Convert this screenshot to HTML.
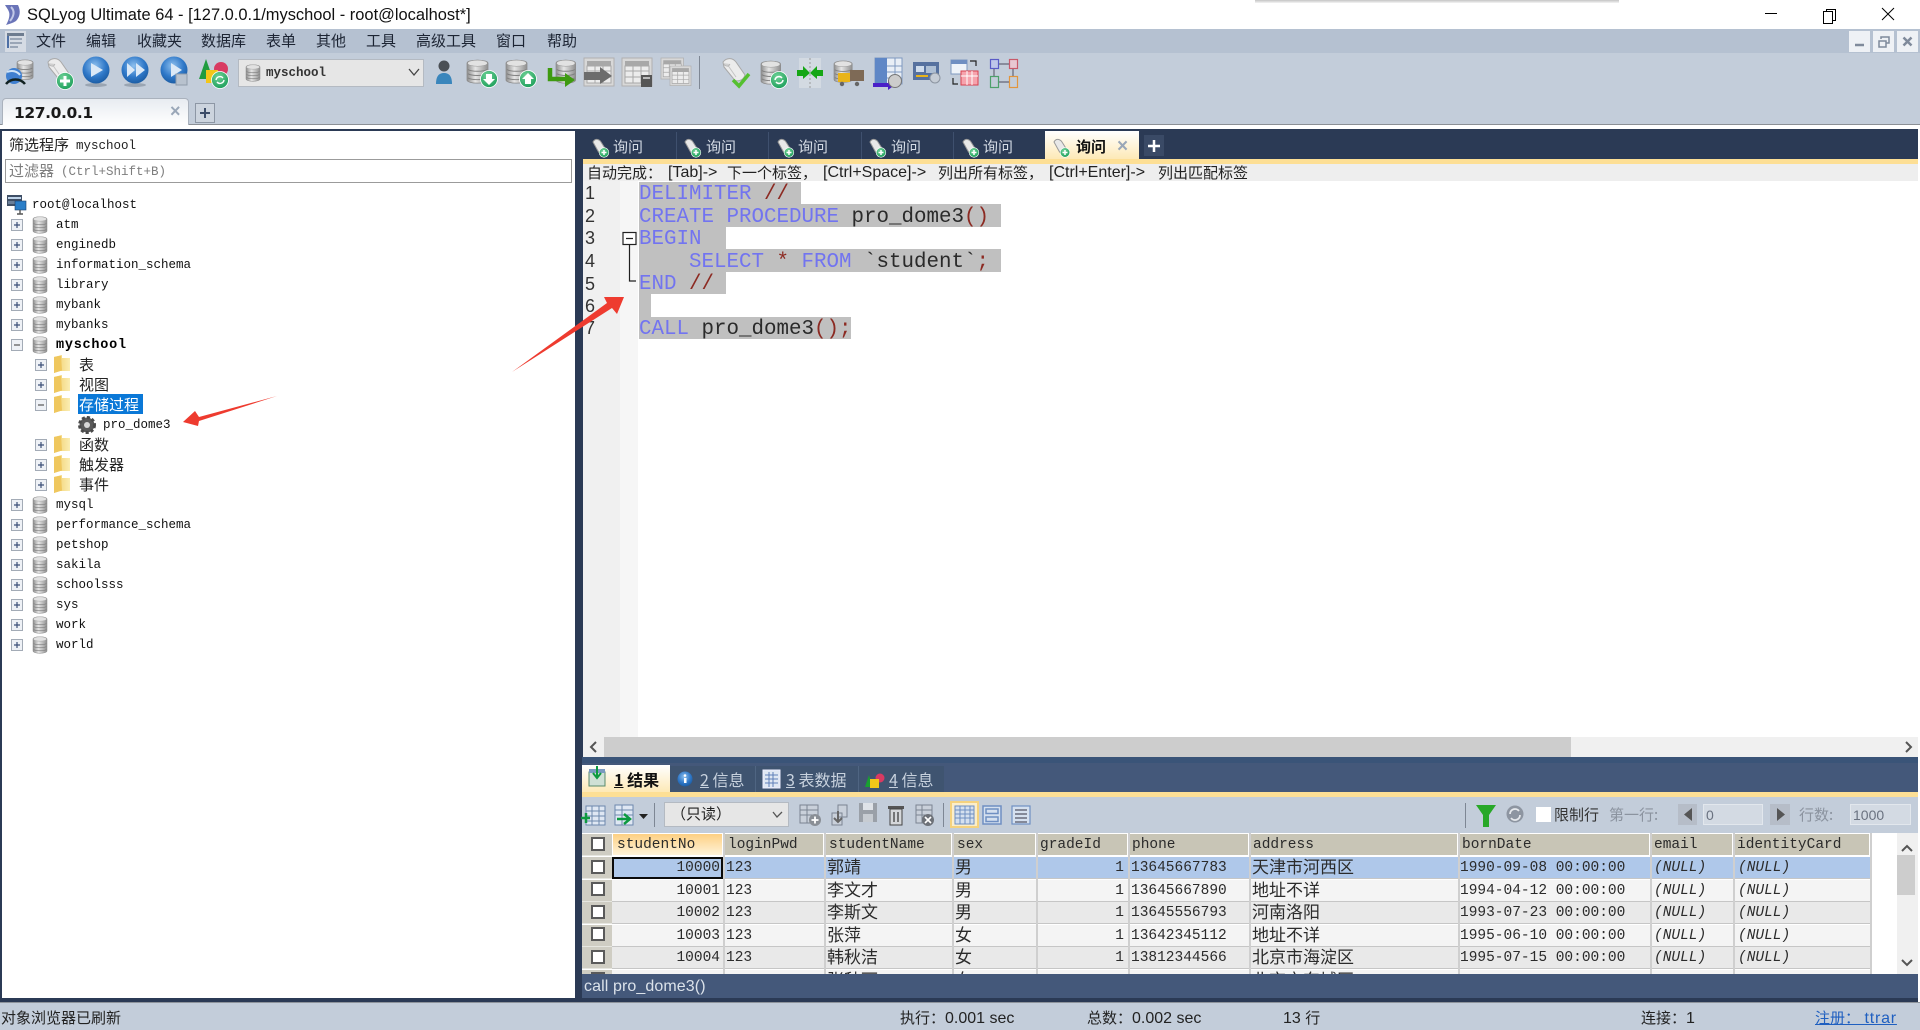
<!DOCTYPE html>
<html lang="zh-CN"><head><meta charset="utf-8"><title>SQLyog Ultimate 64</title>
<style>
html,body{margin:0;padding:0;background:#fff}
body{position:relative;width:1920px;height:1030px;overflow:hidden;font-family:"Liberation Sans","Noto Sans CJK SC",sans-serif;color:#222;filter:blur(.35px)}
.b,.t{position:absolute}
.t{white-space:pre;line-height:1}
.m{font-family:"Liberation Mono","Noto Sans CJK SC",monospace}
.menu{font-size:15px;top:33px;color:#1c2433;font-family:"Noto Sans CJK SC",sans-serif}
.tr{font-family:"Liberation Mono","Noto Sans CJK SC",monospace;font-size:12.5px;color:#111;left:56px}
.cn{font-family:"Noto Sans CJK SC",sans-serif;font-size:15px;left:79px;color:#222}
.q{font-size:15px;top:139px;color:#d4dbe5;font-family:"Noto Sans CJK SC",sans-serif}
.ac{font-size:16px;top:165px;color:#222}
.acz{font-size:15px;font-family:"Noto Sans CJK SC",sans-serif}
.code{font-family:"Liberation Mono",monospace;font-size:20.83px;left:639px;color:#2a2a2a}
.k{color:#7274f0}.o{color:#8c2a22}
.ln{font-size:18px;left:585px;color:#333}
.sel{position:absolute;left:639px;background:#c0c0c0}
.rt{font-size:16px;top:771px;color:#c8d2de;font-family:"Noto Sans CJK SC",sans-serif}
.st{font-size:16px;top:1010px;color:#222}
.stz{font-size:15px;font-family:"Noto Sans CJK SC",sans-serif}
#g{position:absolute;left:582px;top:833px;width:1315px;height:141px;overflow:hidden;background:#fff}
.r{position:absolute;left:0;width:1288px;height:21px;border-bottom:1.5px solid #c6c6c6}
.r span,.h span{position:absolute;top:1px;white-space:pre;font-family:"Liberation Mono","Noto Sans CJK SC",monospace;font-size:14.5px;line-height:21px;color:#2b2b2b}
.r .z{font-size:17px;font-family:"Noto Sans CJK SC",sans-serif;top:-2px}
.r .n{font-style:italic}
.hc{position:absolute;top:1px;height:21px;background:#c8c5b6}
.v{position:absolute;top:0;width:2px;height:141px;background:#cfcfcf}
.rh{position:absolute;left:0;width:30px;height:21px;background:#cfcdc3;border-bottom:1.5px solid #e6e6e0}
.rh i{position:absolute;left:8.5px;top:2.5px;width:10px;height:10px;border:2px solid #5a5a5a;background:#fff}
</style></head><body>
<!-- title bar -->
<div class="b" style="left:1255px;top:0;width:364px;height:3px;background:linear-gradient(#c4c4c4,#f4f4f4)"></div>
<div class="t" style="left:27px;top:7px;font-size:16.45px;color:#111">SQLyog Ultimate 64 - [127.0.0.1/myschool - root@localhost*]</div>
<!-- menu -->
<div class="b" style="left:0;top:29px;width:1920px;height:24px;background:#b5c1d1"></div>
<div class="b" style="left:0;top:53px;width:1920px;height:71px;background:#c3cdda"></div>
<div class="b" style="left:0;top:124px;width:1920px;height:1px;background:#8b8f95"></div>
<div class="t menu" style="left:36px">文件</div><div class="t menu" style="left:86px">编辑</div><div class="t menu" style="left:137px">收藏夹</div><div class="t menu" style="left:201px">数据库</div><div class="t menu" style="left:266px">表单</div><div class="t menu" style="left:316px">其他</div><div class="t menu" style="left:366px">工具</div><div class="t menu" style="left:416px">高级工具</div><div class="t menu" style="left:496px">窗口</div><div class="t menu" style="left:547px">帮助</div>
<div class="b" style="left:1849px;top:31px;width:21px;height:21px;background:#eef1f5"></div>
<div class="b" style="left:1873px;top:31px;width:21px;height:21px;background:#eef1f5"></div>
<div class="b" style="left:1897px;top:31px;width:21px;height:21px;background:#eef1f5"></div>
<!-- db select -->
<div class="b" style="left:238px;top:59px;width:186px;height:28px;background:#e6e6e6;box-sizing:border-box;border:1px solid #b4bac2"></div>
<div class="t m" style="left:266px;top:67px;font-size:12.5px;font-weight:bold;color:#333">myschool</div>
<!-- connection tab -->
<div class="b" style="left:2px;top:98px;width:187px;height:27px;background:linear-gradient(#e8ecf1,#fff);box-sizing:border-box;border:1px solid #aab2bd;border-bottom:0;border-radius:4px 4px 0 0"></div>
<div class="t" style="left:14px;top:106px;font-size:15.5px;font-weight:bold;color:#1a1a1a;font-family:'DejaVu Sans',sans-serif;letter-spacing:-.4px">127.0.0.1</div>
<div class="t" style="left:170px;top:102px;font-size:18px;font-weight:bold;color:#9aa7b8">×</div>
<div class="b" style="left:195px;top:103px;width:20px;height:20px;background:#ccd4de;box-sizing:border-box;border:1px solid #8d97a5"></div>
<!-- main frame -->
<div class="b" style="left:0;top:129px;width:1918px;height:873px;background:#2b3a55"></div>
<div class="b" style="left:2px;top:131px;width:573px;height:867px;background:#fff"></div>
<div class="t" style="left:9px;top:137px;font-size:15px;color:#222;font-family:'Noto Sans CJK SC',sans-serif">筛选程序<span class="m" style="font-size:12.5px;margin-left:7px;position:relative;top:-1px">myschool</span></div>
<div class="b" style="left:5px;top:159px;width:567px;height:24px;box-sizing:border-box;border:1.5px solid #9b9b9b;background:#fff"></div>
<div class="t" style="left:9px;top:163px;font-size:15px;color:#7d7d7d;font-family:'Noto Sans CJK SC',sans-serif">过滤器<span class="m" style="font-size:12.5px;margin-left:7px;position:relative;top:-1px">(Ctrl+Shift+B)</span></div>
<!-- tree -->
<div class="t tr" style="left:32px;top:199px">root@localhost</div>
<div class="t tr" style="top:219px">atm</div><div class="t tr" style="top:239px">enginedb</div><div class="t tr" style="top:259px">information_schema</div><div class="t tr" style="top:279px">library</div><div class="t tr" style="top:299px">mybank</div><div class="t tr" style="top:319px">mybanks</div>
<div class="t tr" style="top:339px;font-weight:bold;color:#000;font-size:13.5px;letter-spacing:.75px">myschool</div>
<div class="t cn" style="top:357px">表</div><div class="t cn" style="top:377px">视图</div>
<div class="b" style="left:78px;top:394px;width:65px;height:20px;background:#0a78d7"></div>
<div class="t cn" style="top:397px;color:#fff">存储过程</div>
<div class="t tr" style="left:103px;top:419px">pro_dome3</div>
<div class="t cn" style="top:437px">函数</div><div class="t cn" style="top:457px">触发器</div><div class="t cn" style="top:477px">事件</div>
<div class="t tr" style="top:499px">mysql</div><div class="t tr" style="top:519px">performance_schema</div><div class="t tr" style="top:539px">petshop</div><div class="t tr" style="top:559px">sakila</div><div class="t tr" style="top:579px">schoolsss</div><div class="t tr" style="top:599px">sys</div><div class="t tr" style="top:619px">work</div><div class="t tr" style="top:639px">world</div>
<!-- query tabs -->
<div class="b" style="left:676px;top:132px;width:1px;height:27px;background:#3f506e"></div><div class="b" style="left:768px;top:132px;width:1px;height:27px;background:#3f506e"></div><div class="b" style="left:861px;top:132px;width:1px;height:27px;background:#3f506e"></div><div class="b" style="left:953px;top:132px;width:1px;height:27px;background:#3f506e"></div>
<div class="t q" style="left:613px">询问</div><div class="t q" style="left:706px">询问</div><div class="t q" style="left:798px">询问</div><div class="t q" style="left:891px">询问</div><div class="t q" style="left:983px">询问</div>
<div class="b" style="left:1045px;top:131px;width:94px;height:28px;background:linear-gradient(#fff,#fde9b6)"></div>
<div class="t q" style="left:1076px;color:#111;font-weight:bold">询问</div>
<div class="t" style="left:1117px;top:137px;font-size:19px;font-weight:bold;color:#9aa7b8">×</div>
<div class="b" style="left:1144px;top:135px;width:20px;height:21px;background:#3a4a66"></div>
<div class="b" style="left:583px;top:159px;width:1335px;height:5px;background:#fddf95"></div>
<div class="b" style="left:583px;top:164px;width:1335px;height:17px;background:#eeeeee"></div>
<div class="t ac acz" style="left:587px">自动完成：</div>
<div class="t ac" style="left:668px">[Tab]-&gt;</div><div class="t ac acz" style="left:727px">下一个标签，</div>
<div class="t ac" style="left:823px">[Ctrl+Space]-&gt;</div><div class="t ac acz" style="left:938px">列出所有标签，</div>
<div class="t ac" style="left:1049px">[Ctrl+Enter]-&gt;</div><div class="t ac acz" style="left:1158px">列出匹配标签</div>
<!-- editor -->
<div class="b" style="left:583px;top:181px;width:1335px;height:556px;background:#fff"></div>
<div class="b" style="left:583px;top:181px;width:37px;height:556px;background:#f0f0f0"></div>
<div class="b" style="left:620px;top:181px;width:18px;height:556px;background:#f6f6f6"></div>
<div class="sel" style="top:182px;width:162px;height:23px"></div>
<div class="sel" style="top:204px;width:362px;height:23px"></div>
<div class="sel" style="top:227px;width:87px;height:22px"></div>
<div class="sel" style="top:249px;width:362px;height:23px"></div>
<div class="sel" style="top:272px;width:87px;height:22px"></div>
<div class="sel" style="top:294px;width:12px;height:23px"></div>
<div class="sel" style="top:317px;width:212px;height:22px"></div>
<div class="t ln" style="top:184px">1</div><div class="t ln" style="top:207px">2</div><div class="t ln" style="top:229px">3</div><div class="t ln" style="top:252px">4</div><div class="t ln" style="top:275px">5</div><div class="t ln" style="top:297px">6</div><div class="t ln" style="top:319px">7</div>
<div class="t code" style="top:185px"><span class="k">DELIMITER</span> <span class="o">//</span></div>
<div class="t code" style="top:208px"><span class="k">CREATE</span> <span class="k">PROCEDURE</span> pro_dome3<span class="o">()</span></div>
<div class="t code" style="top:230px"><span class="k">BEGIN</span></div>
<div class="t code" style="top:253px">    <span class="k">SELECT</span> <span class="o">*</span> <span class="k">FROM</span> `student`<span class="o">;</span></div>
<div class="t code" style="top:275px"><span class="k">END</span> <span class="o">//</span></div>
<div class="t code" style="top:320px"><span class="k">CALL</span> pro_dome3<span class="o">();</span></div>
<!-- h scrollbar -->
<div class="b" style="left:583px;top:737px;width:1335px;height:20px;background:#f0f0f0"></div>
<div class="b" style="left:604px;top:737px;width:967px;height:20px;background:#cdcdcd"></div>
<!-- result tabs -->
<div class="b" style="left:582px;top:757px;width:1336px;height:6px;background:#3a5478"></div>
<div class="b" style="left:582px;top:763px;width:1336px;height:29px;background:#44587a"></div>
<div class="b" style="left:670px;top:766px;width:274px;height:26px;background:#3f5470"></div>
<div class="b" style="left:755px;top:766px;width:1px;height:26px;background:#4f6582"></div><div class="b" style="left:858px;top:766px;width:1px;height:26px;background:#4f6582"></div>
<div class="b" style="left:582px;top:765px;width:88px;height:27px;background:linear-gradient(#fff,#fde9b6)"></div>
<div class="b" style="left:582px;top:792px;width:1336px;height:5px;background:#fddf95"></div>
<div class="t rt" style="left:614px;color:#111;font-weight:bold"><u>1</u> 结果</div>
<div class="t rt" style="left:700px"><u>2</u> 信息</div>
<div class="t rt" style="left:786px"><u>3</u> 表数据</div>
<div class="t rt" style="left:889px"><u>4</u> 信息</div>
<div class="b" style="left:582px;top:797px;width:1336px;height:36px;background:#c3cdda"></div>
<div class="b" style="left:664px;top:802px;width:125px;height:25px;background:#e6e6e6;box-sizing:border-box;border:1px solid #b4bac2"></div>
<div class="t" style="left:671px;top:806px;font-size:15px;font-family:'Noto Sans CJK SC',sans-serif;color:#222">（只读）</div>
<div class="b" style="left:950px;top:801px;width:29px;height:27px;box-sizing:border-box;border:2px solid #f5d27e;background:#fbeecb"></div>
<div class="b" style="left:1536px;top:807px;width:15px;height:15px;background:#fff"></div>
<div class="t" style="left:1554px;top:807px;font-size:15px;color:#333;font-family:'Noto Sans CJK SC',sans-serif">限制行</div>
<div class="t" style="left:1609px;top:807px;font-size:15px;color:#8b939f;font-family:'Noto Sans CJK SC',sans-serif">第一行:</div>
<div class="b" style="left:1678px;top:804px;width:19px;height:21px;background:#b6bdc8"></div>
<div class="b" style="left:1703px;top:804px;width:60px;height:21px;background:#d3dae3;box-sizing:border-box;border:1px solid #e2e7ed"></div>
<div class="t" style="left:1706px;top:808px;font-size:14px;color:#6a7280">0</div>
<div class="b" style="left:1770px;top:804px;width:20px;height:21px;background:#b6bdc8"></div>
<div class="t" style="left:1799px;top:807px;font-size:15px;color:#8b939f;font-family:'Noto Sans CJK SC',sans-serif">行数:</div>
<div class="b" style="left:1850px;top:804px;width:61px;height:21px;background:#d3dae3;box-sizing:border-box;border:1px solid #e2e7ed"></div>
<div class="t" style="left:1853px;top:808px;font-size:14px;color:#6a7280">1000</div>
<!-- grid -->
<div class="b" style="left:582px;top:833px;width:1336px;height:141px;background:#fff"></div>
<div id="g">
 <div class="h">
  <div class="hc" style="left:31px;width:109px;background:linear-gradient(#fdd083,#fff3d8)"></div>
  <div class="hc" style="left:143px;width:98px"></div><div class="hc" style="left:244px;width:125px"></div><div class="hc" style="left:372px;width:81px"></div><div class="hc" style="left:456px;width:89px"></div><div class="hc" style="left:548px;width:118px"></div><div class="hc" style="left:669px;width:206px"></div><div class="hc" style="left:878px;width:189px"></div><div class="hc" style="left:1070px;width:80px"></div><div class="hc" style="left:1153px;width:134px"></div>
  <span style="left:35px;top:2px">studentNo</span><span style="left:146px;top:2px">loginPwd</span><span style="left:247px;top:2px">studentName</span><span style="left:375px;top:2px">sex</span><span style="left:458px;top:2px">gradeId</span><span style="left:550px;top:2px">phone</span><span style="left:671px;top:2px">address</span><span style="left:880px;top:2px">bornDate</span><span style="left:1072px;top:2px">email</span><span style="left:1155px;top:2px">identityCard</span>
 </div>
 <div class="r" style="top:24px;background:#afc8ea"><span style="left:31px;width:107px;text-align:right">10000</span><span style="left:144px">123</span><span class="z" style="left:245px">郭靖</span><span class="z" style="left:373px">男</span><span style="left:445px;width:97px;text-align:right">1</span><span style="left:549px">13645667783</span><span class="z" style="left:670px">天津市河西区</span><span style="left:878px">1990-09-08 00:00:00</span><span class="n" style="left:1072px">(NULL)</span><span class="n" style="left:1156px">(NULL)</span></div>
 <div class="r" style="top:46.5px;background:#f4f4f4"><span style="left:31px;width:107px;text-align:right">10001</span><span style="left:144px">123</span><span class="z" style="left:245px">李文才</span><span class="z" style="left:373px">男</span><span style="left:445px;width:97px;text-align:right">1</span><span style="left:549px">13645667890</span><span class="z" style="left:670px">地址不详</span><span style="left:878px">1994-04-12 00:00:00</span><span class="n" style="left:1072px">(NULL)</span><span class="n" style="left:1156px">(NULL)</span></div>
 <div class="r" style="top:69px;background:#e9e9e9"><span style="left:31px;width:107px;text-align:right">10002</span><span style="left:144px">123</span><span class="z" style="left:245px">李斯文</span><span class="z" style="left:373px">男</span><span style="left:445px;width:97px;text-align:right">1</span><span style="left:549px">13645556793</span><span class="z" style="left:670px">河南洛阳</span><span style="left:878px">1993-07-23 00:00:00</span><span class="n" style="left:1072px">(NULL)</span><span class="n" style="left:1156px">(NULL)</span></div>
 <div class="r" style="top:91.5px;background:#f4f4f4"><span style="left:31px;width:107px;text-align:right">10003</span><span style="left:144px">123</span><span class="z" style="left:245px">张萍</span><span class="z" style="left:373px">女</span><span style="left:445px;width:97px;text-align:right">1</span><span style="left:549px">13642345112</span><span class="z" style="left:670px">地址不详</span><span style="left:878px">1995-06-10 00:00:00</span><span class="n" style="left:1072px">(NULL)</span><span class="n" style="left:1156px">(NULL)</span></div>
 <div class="r" style="top:114px;background:#e9e9e9"><span style="left:31px;width:107px;text-align:right">10004</span><span style="left:144px">123</span><span class="z" style="left:245px">韩秋洁</span><span class="z" style="left:373px">女</span><span style="left:445px;width:97px;text-align:right">1</span><span style="left:549px">13812344566</span><span class="z" style="left:670px">北京市海淀区</span><span style="left:878px">1995-07-15 00:00:00</span><span class="n" style="left:1072px">(NULL)</span><span class="n" style="left:1156px">(NULL)</span></div>
 <div class="r" style="top:136.5px;background:#f4f4f4"><span class="z" style="left:245px">张秋丽</span><span class="z" style="left:373px">女</span><span class="z" style="left:670px">北京市东城区</span></div>
 <div class="v" style="left:141px"></div><div class="v" style="left:242px"></div><div class="v" style="left:370px"></div><div class="v" style="left:454px"></div><div class="v" style="left:546px"></div><div class="v" style="left:667px"></div><div class="v" style="left:876px"></div><div class="v" style="left:1068px"></div><div class="v" style="left:1151px"></div><div class="v" style="left:1288px"></div>
 <div class="rh" style="top:1px"><i></i></div><div class="rh" style="top:24px"><i></i></div><div class="rh" style="top:46.5px"><i></i></div><div class="rh" style="top:69px"><i></i></div><div class="rh" style="top:91.5px"><i></i></div><div class="rh" style="top:114px"><i></i></div><div class="rh" style="top:136.5px"><i></i></div>
 <div class="b" style="left:30px;top:24px;width:111px;height:22px;box-sizing:border-box;border:2px solid #0a0a0a"></div>
</div>
<!-- v scrollbar -->
<div class="b" style="left:1897px;top:833px;width:21px;height:141px;background:#f0f0f0"></div>
<div class="b" style="left:1897px;top:855px;width:18px;height:40px;background:#cdcdcd"></div>
<!-- call -->
<div class="b" style="left:582px;top:974px;width:1336px;height:24px;background:#44587a"></div>
<div class="t" style="left:584px;top:979px;font-size:16px;letter-spacing:.1px;color:#dbe2ea">call pro_dome3()</div>
<!-- status -->
<div class="b" style="left:0;top:1002px;width:1920px;height:28px;background:#c3cdda;border-top:1px solid #8e949c;box-sizing:border-box"></div>
<div class="t st stz" style="left:1px">对象浏览器已刷新</div>
<div class="t st" style="left:900px"><span class="stz">执行：</span>0.001 sec</div>
<div class="t st" style="left:1087px"><span class="stz">总数：</span>0.002 sec</div>
<div class="t st" style="left:1283px">13 <span class="stz">行</span></div>
<div class="t st" style="left:1641px"><span class="stz">连接：</span>1</div>
<div class="t st" style="left:1815px;color:#1f5fc0;text-decoration:underline"><span class="stz">注册：</span> <span style="letter-spacing:.8px">ttrar</span></div>

<svg class="b" style="left:0;top:0" width="1920" height="1030" viewBox="0 0 1920 1030">
<defs>
<linearGradient id="cy" x1="0" x2="1" y1="0" y2="0"><stop offset="0" stop-color="#8d8d8d"/><stop offset=".4" stop-color="#e6e6e6"/><stop offset="1" stop-color="#8f8f8f"/></linearGradient>
<radialGradient id="bl" cx=".45" cy=".35" r=".75"><stop offset="0" stop-color="#8ec0ee"/><stop offset=".55" stop-color="#2f78c8"/><stop offset="1" stop-color="#155295"/></radialGradient>
<radialGradient id="gr" cx=".4" cy=".3" r=".8"><stop offset="0" stop-color="#6fd196"/><stop offset="1" stop-color="#159a55"/></radialGradient>
<linearGradient id="fo" x1="0" x2="1" y1="0" y2="0"><stop offset="0" stop-color="#f0cb66"/><stop offset="1" stop-color="#fbeeb3"/></linearGradient>
<g id="db"><path d="M0 3C0 0 14 0 14 3V15C14 18 0 18 0 15Z" fill="url(#cy)" stroke="#8a8a8a" stroke-width=".5"/><ellipse cx="7" cy="3" rx="6.6" ry="2.2" fill="#e2e2e2" stroke="#9a9a9a" stroke-width=".4"/><path d="M.6 7.5C3 9.2 11 9.2 13.4 7.5M.6 10.5C3 12.2 11 12.2 13.4 10.5M.6 13.5C3 15.2 11 15.2 13.4 13.5" stroke="#808080" stroke-width=".7" fill="none"/></g>
<g id="pl"><rect x=".5" y=".5" width="11" height="11" fill="#eef1f6" stroke="#a3abb6"/><path d="M3 6H9M6 3V9" stroke="#3c4f78" stroke-width="1.2"/></g>
<g id="mi"><rect x=".5" y=".5" width="11" height="11" fill="#eef1f6" stroke="#a3abb6"/><path d="M3 6H9" stroke="#555" stroke-width="1.2"/></g>
<g id="fd"><path d="M0 2L8 0V3H16V16H6L0 18Z" fill="url(#fo)"/><path d="M0 2L7 0.500L8 15.500L0 18Z" fill="#efc75e"/></g>
<g id="scr"><path d="M1 4C5 -1 11 0 14 4L23 17C21 23 14 25 11 20L2 9Z" fill="#ececec" stroke="#a8a8a8"/><path d="M5 6L14 19" stroke="#c4c4c4"/><path d="M1 5C3 9 7 9 8 6" fill="#cfcfcf" stroke="#a8a8a8" stroke-width=".6"/></g>
<g id="gb"><circle r="8.5" fill="url(#gr)" stroke="#fff" stroke-width=".8"/></g>
<g id="qi"><path d="M2 5C4 1 8 2 10 5L15 13C14 17 9 18 7 14Z" fill="#e8e8e8" stroke="#9a9a9a"/><circle cx="13" cy="15.500" r="4.800" fill="url(#gr)" stroke="#fff" stroke-width=".6"/><path d="M10.500 15.500H15.500M13 13V18" stroke="#fff" stroke-width="1.500"/></g>
<g id="tb"><rect x="0" y="0" width="30" height="28" fill="#d8d8d8" stroke="#b0b0b0"/><rect x="3" y="3" width="24" height="5" fill="#a8a8a8"/><path d="M3 8H27V25H3ZM3 13H27M3 19H27M11 8V25M19 8V25" stroke="#a8a8a8" fill="#ececec"/></g>
</defs>
<!-- menu icon -->
<rect x="5" y="31" width="21" height="21" fill="#d5dbe4"/><rect x="7" y="33" width="17" height="3" fill="#6d7c90"/><path d="M10 39H22M10 43H22M10 47H18" stroke="#8795a8" stroke-width="1.500"/><path d="M8 36V48" stroke="#4d6fa5" stroke-width="2"/>
<!-- logo -->
<path d="M5 5H18C21 11 20 17 16 21C13 23 9 24 6 25C9 20 10 15 9 12C8 9 6 7 5 5Z" fill="#6a74b8"/><path d="M11 7C15 11 14 16 10 21" stroke="#c2c9e8" stroke-width="2" fill="none"/>
<!-- window controls -->
<path d="M1765 13.500H1777" stroke="#000" stroke-width="1"/>
<rect x="1823.500" y="11.500" width="9" height="12" fill="#fff" stroke="#000"/><path d="M1826.500 11.500V9.500H1835.500V20.500H1832.500" fill="none" stroke="#000"/>
<path d="M1882 8L1894 20M1894 8L1882 20" stroke="#000" stroke-width="1"/>
<path d="M1855 45H1864" stroke="#7f8a9b" stroke-width="2.500"/>
<rect x="1879" y="41" width="7" height="6" fill="none" stroke="#7f8a9b" stroke-width="1.500"/><path d="M1881 39V37H1889V43H1886" fill="none" stroke="#7f8a9b" stroke-width="1.500"/>
<path d="M1903.500 37.500L1911.500 45.500M1911.500 37.500L1903.500 45.500" stroke="#7f8a9b" stroke-width="2.500"/>
<!-- toolbar -->
<use href="#db" transform="translate(17,59) scale(1.150,1.200)"/>
<circle cx="14" cy="76" r="8" fill="#3f7fd0"/><path d="M6 84C11 78 20 78 25 84" stroke="#122" stroke-width="2.500" fill="none"/><path d="M7 72C12 70 17 71 20 75" stroke="#cfe3f7" stroke-width="2" fill="none"/>
<use href="#scr" transform="translate(47,58)"/><use href="#gb" transform="translate(65,81)"/><path d="M60 81H70M65 76V86" stroke="#fff" stroke-width="3"/>
<ellipse cx="96" cy="85" rx="11" ry="2" fill="#9aa5b2"/><circle cx="96" cy="70" r="13.500" fill="url(#bl)"/><path d="M91 63L103 70L91 77Z" fill="#dbe9f7"/>
<ellipse cx="135" cy="85" rx="11" ry="2" fill="#9aa5b2"/><circle cx="135" cy="70" r="13.500" fill="url(#bl)"/><path d="M127 63L135 70L127 77ZM136 63L145 70L136 77Z" fill="#dbe9f7"/>
<circle cx="174" cy="70" r="13.500" fill="url(#bl)"/><path d="M171 63L182 70L171 77Z" fill="#dbe9f7"/><rect x="176" y="74" width="11" height="11" fill="#b8c2ce" stroke="#8f9cab"/>
<path d="M206 59L213 79H199Z" fill="#1f9c3f"/><circle cx="221" cy="69" r="7" fill="#d83a62"/><rect x="206" y="70" width="12" height="13" fill="#f3c619"/><use href="#gb" transform="translate(220,80)"/><path d="M216 80a4 4 0 0 1 7-2M224 80a4 4 0 0 1-7 2" stroke="#fff" stroke-width="1.400" fill="none"/>
<use href="#db" transform="translate(246,64) scale(1,1)"/><path d="M409 69L414 75L419 69" fill="none" stroke="#444" stroke-width="1.300"/>
<circle cx="444" cy="66" r="5.500" fill="#4a4f55"/><path d="M436 84C436 76 439 73 444 73C449 73 452 76 452 84Z" fill="#3a86bc"/>
<use href="#db" transform="translate(467,59) scale(1.500,1.400)"/><use href="#gb" transform="translate(489,79)"/><path d="M486 74H492V79H495L489 85L483 79H486Z" fill="#fff"/>
<use href="#db" transform="translate(506,59) scale(1.500,1.400)"/><use href="#gb" transform="translate(528,79)"/><path d="M525 84H531V79H534L528 73L522 79H525Z" fill="#fff"/>
<use href="#db" transform="translate(556,59) scale(1.400,1.400)"/><path d="M550 68V79H566" stroke="#3e9a10" stroke-width="4.500" fill="none"/><path d="M565 73L575 80L565 87Z" fill="#3e9a10"/>
<use href="#tb" transform="translate(584,58)"/><path d="M584 72H600V67L612 76L600 84V80H584Z" fill="#6c6c6c"/>
<use href="#tb" transform="translate(622,58)"/><rect x="641" y="75" width="11" height="12" fill="#555"/><path d="M643 78H650" stroke="#ddd" stroke-width="1.500"/>
<use href="#tb" transform="translate(661,58) scale(.75)"/><use href="#tb" transform="translate(670,66) scale(.7)"/>
<rect x="699" y="56" width="1" height="33" fill="#7e8794"/>
<use href="#scr" transform="translate(722,58)"/><path d="M733 80L739 86L749 74" stroke="#55c030" stroke-width="3.500" fill="none"/>
<use href="#db" transform="translate(761,60) scale(1.400,1.400)"/><use href="#gb" transform="translate(779,80)"/><path d="M775 80a4 4 0 0 1 7-2M783 80a4 4 0 0 1-7 2" stroke="#fff" stroke-width="1.500" fill="none"/>
<rect x="799" y="58" width="22" height="30" fill="#d3dae2"/><path d="M810 58V88" stroke="#999" stroke-dasharray="2 2"/><path d="M797 70H803V66L810 73L803 79V76H797ZM823 70H817V66L810 73L817 79V76H823Z" fill="#15a615"/>
<use href="#db" transform="translate(834,60) scale(1.300,1.300)"/><rect x="850" y="70" width="14" height="11" fill="#7e6a56"/><rect x="838" y="73" width="12" height="9" fill="#e9b419"/><circle cx="842" cy="84" r="2.200" fill="#666"/><circle cx="857" cy="84" r="2.200" fill="#666"/>
<rect x="875" y="58" width="27" height="26" fill="#e8eef6" stroke="#7f99c0"/><rect x="875" y="58" width="12" height="26" fill="#5f87c6"/><path d="M887 66H902M887 72H902M887 78H902M895 58V84" stroke="#7f99c0"/><path d="M873 74V83H888V80L896 84L888 90V87H873Z" fill="#4a20c8"/><circle cx="895" cy="81" r="6.500" fill="#ccc" stroke="#777"/>
<rect x="913" y="62" width="26" height="18" fill="#56719f"/><rect x="916" y="66" width="8" height="6" fill="#cfdcec"/><rect x="926" y="66" width="10" height="7" fill="#aebfd4"/><rect x="916" y="75" width="12" height="2" fill="#e9b419"/><circle cx="935" cy="78" r="5" fill="#c5ccd5" stroke="#8c95a1"/>
<rect x="951" y="60" width="16" height="14" fill="#eef3f9" stroke="#7f99c0"/><rect x="951" y="60" width="16" height="4" fill="#6f8fc2"/><rect x="961" y="71" width="17" height="14" fill="#f6a3ad" stroke="#d8404f"/><path d="M961 76H978M967 71V85M972 71V85" stroke="#fff"/><path d="M970 61H976V66M953 78V84H958" stroke="#222" stroke-width="1.200" fill="none"/>
<g fill="none" stroke-width="1.200"><rect x="990.500" y="59.500" width="8" height="9" stroke="#5a5bc6" fill="#bfc6ea"/><rect x="1009.500" y="59.500" width="8" height="9" stroke="#c85a6a" fill="#e8c8d2"/><rect x="990.500" y="76.500" width="8" height="11" stroke="#4da06a"/><rect x="1009.500" y="76.500" width="8" height="11" stroke="#e2953d"/><path d="M999 64H1009M1013 69V76M999 82H1009M994 69V76" stroke="#667"/></g>
<!-- tab plus -->
<path d="M205 108V118M200 113H210" stroke="#3b4c68" stroke-width="2"/>
<path d="M1154 140V152M1148 146H1160" stroke="#fff" stroke-width="2.500"/>
<!-- tree icons -->
<g><rect x="7" y="195" width="15" height="11" fill="#3f4f66"/><rect x="8" y="197" width="13" height="2" fill="#bfd4ea"/><rect x="8" y="201" width="13" height="3" fill="#6a7f99"/><rect x="15" y="201" width="11" height="9" fill="#2a7ec8" stroke="#1a3f6a" stroke-width=".6"/><path d="M17 214H23M20 210V214" stroke="#555" stroke-width="1.400"/></g>
<use href="#db" x="33" y="216"/><use href="#pl" x="11" y="219"/>
<use href="#db" x="33" y="236"/><use href="#pl" x="11" y="239"/>
<use href="#db" x="33" y="256"/><use href="#pl" x="11" y="259"/>
<use href="#db" x="33" y="276"/><use href="#pl" x="11" y="279"/>
<use href="#db" x="33" y="296"/><use href="#pl" x="11" y="299"/>
<use href="#db" x="33" y="316"/><use href="#pl" x="11" y="319"/>
<use href="#db" x="33" y="336"/><use href="#mi" x="11" y="339"/>
<use href="#fd" x="54" y="355"/><use href="#pl" x="35" y="359"/>
<use href="#fd" x="54" y="375"/><use href="#pl" x="35" y="379"/>
<use href="#fd" x="54" y="395"/><use href="#mi" x="35" y="399"/>
<use href="#fd" x="54" y="435"/><use href="#pl" x="35" y="439"/>
<use href="#fd" x="54" y="455"/><use href="#pl" x="35" y="459"/>
<use href="#fd" x="54" y="475"/><use href="#pl" x="35" y="479"/>
<use href="#db" x="33" y="496"/><use href="#pl" x="11" y="499"/>
<use href="#db" x="33" y="516"/><use href="#pl" x="11" y="519"/>
<use href="#db" x="33" y="536"/><use href="#pl" x="11" y="539"/>
<use href="#db" x="33" y="556"/><use href="#pl" x="11" y="559"/>
<use href="#db" x="33" y="576"/><use href="#pl" x="11" y="579"/>
<use href="#db" x="33" y="596"/><use href="#pl" x="11" y="599"/>
<use href="#db" x="33" y="616"/><use href="#pl" x="11" y="619"/>
<use href="#db" x="33" y="636"/><use href="#pl" x="11" y="639"/>
<!-- gear -->
<circle cx="87" cy="425" r="7.500" fill="#5a5a5a" stroke="#4a4a4a" stroke-width="3" stroke-dasharray="3 2"/><circle cx="87" cy="425" r="3" fill="#d8d8d8"/>
<!-- query tab icons -->
<use href="#qi" x="591" y="137"/><use href="#qi" x="683" y="137"/><use href="#qi" x="776" y="137"/><use href="#qi" x="868" y="137"/><use href="#qi" x="961" y="137"/><use href="#qi" x="1052" y="137"/>
<!-- fold -->
<rect x="623" y="232.500" width="13" height="12" fill="#fff" stroke="#222" stroke-width="1.200"/><path d="M626 238.500H633M629.500 245V281H636" fill="none" stroke="#222" stroke-width="1.200"/>
<!-- scroll arrows -->
<path d="M596 742L591 747L596 752" fill="none" stroke="#555" stroke-width="2"/><path d="M1906 742L1911 747L1906 752" fill="none" stroke="#555" stroke-width="2"/>
<path d="M1902 851L1907 846L1912 851" fill="none" stroke="#555" stroke-width="2"/><path d="M1902 960L1907 965L1912 960" fill="none" stroke="#555" stroke-width="2"/>
<!-- result tab icons -->
<g transform="translate(0,-1)">
<rect x="589" y="773" width="16" height="14" fill="#cfe0d5" stroke="#5a8a6c"/><rect x="589" y="770" width="16" height="4" fill="#7a9ac0"/><path d="M597 767V778M593 774L597 779L601 774" stroke="#0d9a40" stroke-width="2" fill="none"/>
<circle cx="685" cy="780" r="7.500" fill="url(#bl)"/><rect x="684" y="779" width="2.500" height="5" fill="#fff"/><circle cx="685" cy="776.500" r="1.300" fill="#fff"/>
<rect x="763" y="771" width="17" height="18" fill="#dfe7f3" stroke="#eef"/><path d="M765 776H778M765 780H778M765 784H778M769 773V788M773 773V788" stroke="#5f7fb8"/>
<path d="M865 788L869 776L872 788Z" fill="#18a030"/><circle cx="880" cy="779" r="4.500" fill="#d83a62"/><rect x="870" y="780" width="9" height="9" fill="#f3c619"/>
<!-- result toolbar icons -->
<g fill="#dfe7f3" stroke="#6e88ad"><rect x="586" y="807" width="19" height="19"/><path d="M586 812H605M586 817H605M586 822H605M592 807V826M599 807V826" fill="none"/></g><path d="M586 814V824M581 819H590" stroke="#0d9a40" stroke-width="2.500"/>
<g fill="#dfe7f3" stroke="#6e88ad"><rect x="615" y="806" width="18" height="20"/><path d="M615 811H633M615 816H633M622 806V826" fill="none"/></g><path d="M617 820H628M624 815L630 820L624 825" stroke="#0d9a40" stroke-width="2.500" fill="none"/>
<path d="M639 815H648L643.500 820Z" fill="#222"/><rect x="654" y="804" width="1" height="24" fill="#7e8794"/>
<path d="M773 813L777 818L782 813" fill="none" stroke="#555" stroke-width="1.300"/>
<g fill="#c9d0da" stroke="#7b8491"><rect x="800" y="806" width="18" height="18"/><path d="M800 811H818M800 816H818M807 806V824" fill="none"/></g><circle cx="815" cy="821" r="6" fill="#8a8f96"/><path d="M811.500 821H818.500M815 817.500V824.500" stroke="#fff" stroke-width="1.800"/>
<path d="M832 814H842V826H832ZM838 806H847V818H838Z" fill="#c9d0da" stroke="#7b8491"/><path d="M838 812V822M834 819L838 823L842 819" stroke="#666" fill="none" stroke-width="2"/>
<path d="M859 804H877V823H859Z" fill="#9aa0a8"/><rect x="863" y="804" width="10" height="7" fill="#dfe3e8"/><rect x="863" y="815" width="10" height="8" fill="#c7ccd2"/>
<rect x="888" y="807" width="16" height="3" fill="#555"/><path d="M890 810H902V826H890Z" fill="#d5d7da" stroke="#444"/><path d="M894 813V823M898 813V823" stroke="#555" stroke-width="1.500"/>
<g fill="#c9d0da" stroke="#7b8491"><rect x="916" y="806" width="16" height="18"/><path d="M916 811H932M916 816H932M922 806V824" fill="none"/></g><circle cx="928" cy="821" r="6" fill="#6d7178"/><path d="M925 818L931 824M931 818L925 824" stroke="#fff" stroke-width="1.600"/>
<rect x="943" y="804" width="1" height="24" fill="#7e8794"/>
<g fill="#d5e0ef" stroke="#6f8fc2"><rect x="955" y="807" width="19" height="18"/><path d="M955 811H974M955 815H974M955 819H974M960 807V825M965 807V825M970 807V825" fill="none"/></g>
<g fill="#d5e0ef" stroke="#6f8fc2" stroke-width="1.500"><rect x="983" y="807" width="18" height="18"/><rect x="986" y="810" width="12" height="4.500"/><rect x="986" y="818" width="12" height="4.500"/></g>
<g fill="#d5e0ef" stroke="#6f8fc2" stroke-width="1.200"><rect x="1012" y="807" width="18" height="18"/><path d="M1015 811H1027M1015 815H1027M1015 819H1027M1015 823H1027" fill="none" stroke="#556"/></g>
<rect x="1465" y="804" width="1" height="25" fill="#7e8794"/>
<path d="M1476 806H1496L1489 816V828H1483V816Z" fill="#28a828"/>
<circle cx="1515" cy="815" r="8.500" fill="#8d95a1"/><path d="M1510 815a5 5 0 0 1 9-3M1520 816a5 5 0 0 1-9 3" stroke="#e5e8ec" stroke-width="1.800" fill="none"/>
<path d="M1692 809L1684 815.500L1692 822Z" fill="#555"/><path d="M1777 809L1785 815.500L1777 822Z" fill="#555"/>
</g>
<!-- red arrows -->
<path d="M512 372L607 303L604 297L624 297L617 314L612 308Z" fill="#ee3b2f"/>
<path d="M277 396L199 417L195 411L183 422L198 426L199 421Z" fill="#ee3b2f"/>
</svg>
</body></html>
